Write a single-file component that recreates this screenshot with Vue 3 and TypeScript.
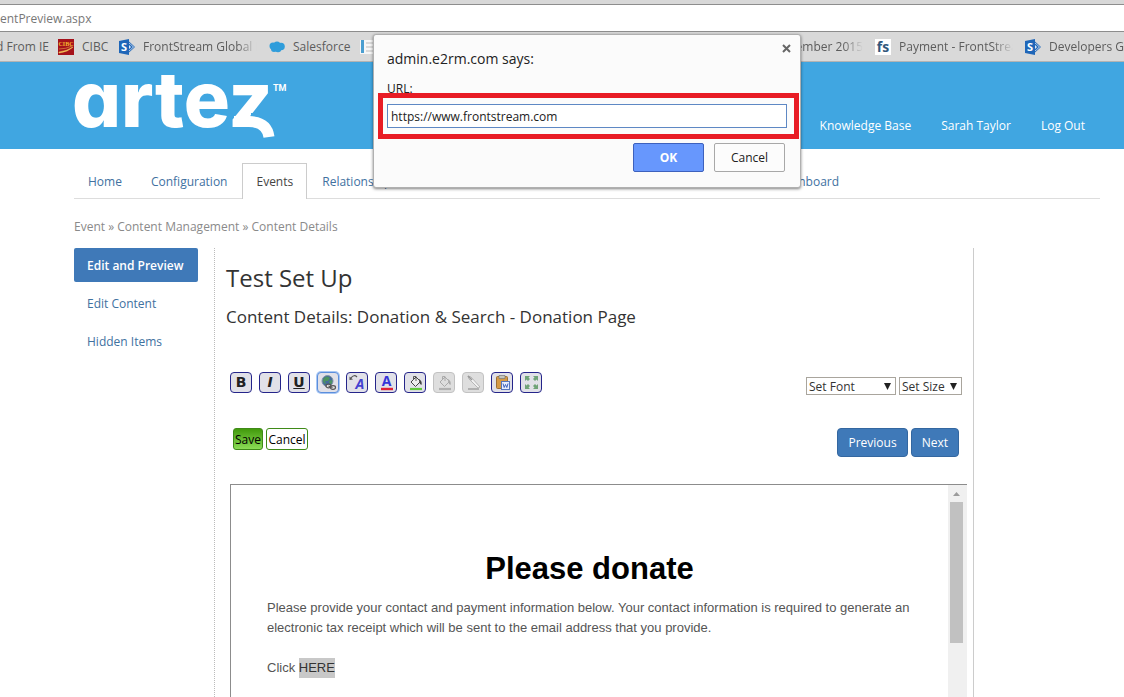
<script setup lang="ts">
import { ref } from 'vue'

const url = ref('https://www.frontstream.com')
const font = ref('Set Font')
const size = ref('Set Size')
const tabs = [
  { name: 'Home', active: false },
  { name: 'Configuration', active: false },
  { name: 'Events', active: true },
  { name: 'Relationships', active: false },
  { name: 'Dashboard', active: false },
]
const sideItems = ['Edit and Preview', 'Edit Content', 'Hidden Items']
const tools = [
  { id: 'bold', label: 'Bold' },
  { id: 'italic', label: 'Italic' },
  { id: 'underline', label: 'Underline' },
  { id: 'link', label: 'Insert link' },
  { id: 'style', label: 'Text style' },
  { id: 'color', label: 'Text color' },
  { id: 'fill', label: 'Background color' },
  { id: 'fill-off', label: 'Fill unavailable' },
  { id: 'line-off', label: 'Line unavailable' },
  { id: 'paste', label: 'Paste from Word' },
  { id: 'full', label: 'Full screen' },
]
</script>

<template>
  <div class="screen">
    <div class="strip"></div>
    <div class="address">entPreview.aspx</div>
    <nav class="bookmarks" aria-label="Bookmarks">
      <a href="#" class="bm first"><span class="bm-label">Imported From IE</span></a>
      <a href="#" class="bm cibc">
        <svg width="16" height="16" viewBox="0 0 16 16">
          <rect width="16" height="16" fill="#a5121b" />
          <text x="8" y="6.500" text-anchor="middle" font-size="6" font-weight="bold" fill="#f5b730" font-family="Liberation Serif, serif">CIBC</text>
          <path d="M1 13Q9 12 15 8Q10 13 1 14Z" fill="#f5c95b" stroke="#f5c95b" stroke-width=".5" />
          <path d="M1 10Q8 10 14 7" fill="none" stroke="#e8a04a" stroke-width=".6" />
        </svg>
        <span class="bm-label">CIBC</span>
      </a>
      <a href="#" class="bm">
        <svg width="16" height="16" viewBox="0 0 16 16">
          <path d="M9 2l6.500 6L9 14z" fill="#dce9f6" stroke="#2468b8" stroke-width="1" />
          <path d="M10 5l3 3-3 3" fill="none" stroke="#2468b8" stroke-width="1.400" />
          <path d="M0 2L10 0v16L0 14z" fill="#1f66b8" />
          <text x="5" y="12" text-anchor="middle" font-size="11" font-weight="bold" fill="#fff" font-family="Open Sans, sans-serif">S</text>
        </svg>
        <span class="bm-label">FrontStream Global Intranet</span>
      </a>
      <a href="#" class="bm sales">
        <svg width="16" height="16" viewBox="0 0 16 16">
          <g fill="#2f9ddb"><circle cx="4" cy="7" r="3.500" /><circle cx="8" cy="6" r="3.500" /><circle cx="12" cy="7.500" r="3.800" /><circle cx="5" cy="10" r="3" /><circle cx="9" cy="10" r="3.300" /></g>
        </svg>
        <span class="bm-label">Salesforce</span>
      </a>
      <a href="#" class="bm" aria-label="Document">
        <svg width="16" height="16" viewBox="0 0 16 16">
          <path d="M0 1h16v14H0z" fill="#f6f6f6" /><path d="M1 1h3v13H1z" fill="#4a9ed0" />
          <path d="M6 4h8M6 8h8M6 12h8" stroke="#bcbcbc" />
        </svg>
      </a>
      <a href="#" class="bm covered"><span class="bm-label">September 2015</span></a>
      <a href="#" class="bm">
        <svg width="16" height="16" viewBox="0 0 16 16">
          <rect width="16" height="16" fill="#fff" />
          <text x="8" y="13" text-anchor="middle" font-size="14" font-weight="bold" fill="#32587c" font-family="Open Sans, sans-serif">fs</text>
        </svg>
        <span class="bm-label">Payment - FrontStream</span>
      </a>
      <a href="#" class="bm">
        <svg width="16" height="16" viewBox="0 0 16 16">
          <path d="M9 2l6.500 6L9 14z" fill="#dce9f6" stroke="#2468b8" stroke-width="1" />
          <path d="M10 5l3 3-3 3" fill="none" stroke="#2468b8" stroke-width="1.400" />
          <path d="M0 2L10 0v16L0 14z" fill="#1f66b8" />
          <text x="5" y="12" text-anchor="middle" font-size="11" font-weight="bold" fill="#fff" font-family="Open Sans, sans-serif">S</text>
        </svg>
        <span class="bm-label">Developers Guide</span>
      </a>
    </nav>

    <header class="header">
      <svg class="logo" width="220" height="88" viewBox="0 0 220 88" role="img" aria-label="artez">
        <text class="wordmark" x="-2" y="66">artez</text>
        <path d="M177 52H200V70H177Z" fill="#40a6e1" />
        <path d="M160 60.500H175Q193 61 195 76" fill="none" stroke="#fff" stroke-width="11" />
        <text class="tm" x="199" y="30">TM</text>
      </svg>
      <nav class="user-links" aria-label="Account">
        <a href="#">Knowledge Base</a>
        <a href="#">Sarah Taylor</a>
        <a href="#">Log Out</a>
      </nav>
    </header>

    <div class="page">
      <nav class="tabs" aria-label="Main">
        <a v-for="t in tabs" :key="t.name" href="#" class="tab" :class="{ active: t.active, last: t.name === 'Dashboard' }">{{ t.name }}</a>
      </nav>
      <p class="crumbs">Event » Content Management » Content Details</p>
      <div class="columns">
        <nav class="side" aria-label="Content">
          <a v-for="(s, i) in sideItems" :key="s" href="#" :class="{ current: i === 0 }">{{ s }}</a>
        </nav>
        <main class="main">
          <h1>Test Set Up</h1>
          <h2>Content Details: Donation &amp; Search - Donation Page</h2>
          <div class="toolbar">
            <div class="tools">
              <button v-for="t in tools" :key="t.id" type="button" class="tool" :class="{ off: t.id.endsWith('-off'), focus: t.id === 'link' }" :disabled="t.id.endsWith('-off')" :aria-label="t.label">
                <b v-if="t.id === 'bold'" class="g">B</b>
                <i v-else-if="t.id === 'italic'" class="g">I</i>
                <u v-else-if="t.id === 'underline'" class="g">U</u>
                <svg v-else-if="t.id === 'link'" width="19" height="19" viewBox="0 0 19 19">
                  <circle cx="8.500" cy="8" r="5.500" fill="#456c9c" stroke="#8495a8" />
                  <path d="M5 5Q8 2 11 5L9 8L6 8L7 11Q4 10 4 7ZM10 8L13 7Q14 10 11 12Z" fill="#4c9460" />
                  <g fill="#ddd" stroke="#555" stroke-width="1.200"><ellipse cx="9.500" cy="13" rx="2.500" ry="1.800" /><ellipse cx="14" cy="14.500" rx="2.500" ry="1.800" /></g>
                  <path d="M9.500 13L13.500 14.500" stroke="#555" stroke-width="1.200" />
                </svg>
                <svg v-else-if="t.id === 'style'" width="19" height="19" viewBox="0 0 19 19">
                  <text x="12" y="16" text-anchor="middle" class="ital" fill="#4441d0">A</text>
                  <path d="M3 5Q6 1 9 4" fill="none" stroke="#555" stroke-width="1.200" />
                  <path d="M1.500 3.500L5 6.500L1.500 7Z" fill="#555" />
                </svg>
                <svg v-else-if="t.id === 'color'" width="19" height="19" viewBox="0 0 19 19">
                  <text x="9.500" y="13" text-anchor="middle" class="letter" fill="#3636d8">A</text>
                  <path d="M4 16h12" stroke="#e02235" stroke-width="2.400" />
                </svg>
                <svg v-else-if="t.id === 'fill' || t.id === 'fill-off'" width="19" height="19" viewBox="0 0 19 19">
                  <path d="M5 9l5-5 4.500 4.500-5 5z" :fill="t.id === 'fill' ? '#eee' : '#ddd'" :stroke="t.id === 'fill' ? '#444' : '#aaa'" />
                  <path d="M7.500 7V3.500h2.500V8" fill="none" :stroke="t.id === 'fill' ? '#555' : '#aaa'" />
                  <path d="M13 6q3.500 2 2.500 6-2-1-2.500-4z" :fill="t.id === 'fill' ? '#444' : '#aaa'" />
                  <path d="M4 16h12" :stroke="t.id === 'fill' ? '#62c83f' : '#b0b0b0'" stroke-width="2.200" />
                </svg>
                <svg v-else-if="t.id === 'line-off'" width="19" height="19" viewBox="0 0 19 19">
                  <path d="M4 3l3 1 9 10-2 1L5 6z" fill="#f0f0f0" stroke="#aaa" stroke-width=".8" />
                  <path d="M4 3l4 4" stroke="#999" stroke-width="1.600" />
                  <path d="M4 16h11" stroke="#b0b0b0" stroke-width="2" />
                </svg>
                <svg v-else-if="t.id === 'paste'" width="19" height="19" viewBox="0 0 19 19">
                  <rect x="3.500" y="3.500" width="11" height="12" rx="1" fill="#d59a46" stroke="#9d7135" />
                  <path d="M6 2.500h6v3H6z" fill="#c5c5bd" stroke="#777" stroke-width=".7" />
                  <rect x="8.500" y="8.500" width="8" height="8" fill="#e7eeff" stroke="#5475bd" />
                  <path d="M10 10.500l1.200 4 1.300-3 1.300 3 1.200-4" fill="none" stroke="#3d62bd" />
                </svg>
                <svg v-else width="19" height="19" viewBox="0 0 19 19">
                  <g fill="#6fa377"><path d="M3 3h5L6.500 4.500 8 6 6 8 4.500 6.500 3 8zM16 3h-5l1.500 1.500L11 6l2 2 1.500-1.500L16 8zM3 16h5l-1.500-1.500L8 13l-2-2-1.500 1.500L3 11zM16 16h-5l1.500-1.500L11 13l2-2 1.500 1.500L16 11z" /></g>
                </svg>
              </button>
            </div>
            <div class="selects">
              <label><select v-model="font" class="font-select" aria-label="Font"><option>Set Font</option></select></label>
              <label><select v-model="size" class="size-select" aria-label="Size"><option>Set Size</option></select></label>
            </div>
          </div>
          <div class="actions">
            <div class="save-group">
              <button type="button" class="save">Save</button>
              <button type="button" class="discard">Cancel</button>
            </div>
            <div class="steps">
              <button type="button">Previous</button>
              <button type="button">Next</button>
            </div>
          </div>
          <section class="editor">
            <div class="document">
              <h3>Please donate</h3>
              <p>Please provide your contact and payment information below. Your contact information is required to generate an electronic tax receipt which will be sent to the email address that you provide.</p>
              <p>Click <mark>HERE</mark></p>
            </div>
            <div class="scroll">
              <svg width="17" height="17" viewBox="0 0 17 17"><path d="M4 11l3.500-4 3.500 4z" fill="#9b9b9b" /></svg>
              <div class="thumb"></div>
            </div>
          </section>
        </main>
      </div>
    </div>

    <form class="dialog" role="dialog" aria-labelledby="dialog-title" @submit.prevent>
      <div class="dialog-head">
        <strong id="dialog-title">admin.e2rm.com says:</strong>
        <button type="button" class="close" aria-label="Close">
          <svg width="9" height="9" viewBox="0 0 9 9"><path d="M1 1l7 7M8 1L1 8" stroke="#666" stroke-width="2" /></svg>
        </button>
      </div>
      <label for="url" class="url-label">URL:</label>
      <div class="highlight"><input id="url" v-model="url" type="text" /></div>
      <div class="dialog-actions">
        <button type="submit" class="ok">OK</button>
        <button type="button" class="no">Cancel</button>
      </div>
    </form>
  </div>
</template>

<style>
html,
body {
  margin: 0;
  background: #fff;
}
</style>

<style scoped>
* {
  box-sizing: border-box;
}
.screen {
  position: relative;
  display: flex;
  flex-direction: column;
  height: 100vh;
  overflow: hidden;
  font: 12px/18px "Open Sans", sans-serif;
  color: #333;
}
a {
  text-decoration: none;
  color: #41719f;
}
button,
input,
select {
  font: inherit;
  margin: 0;
  padding: 0;
}
.strip {
  flex: none;
  height: 5px;
  background: #d8d8d8;
  border-bottom: 1px solid #8d8d8d;
}
.address {
  flex: none;
  height: 26px;
  line-height: 27px;
  font-size: 12px;
  color: #777;
}
.bookmarks {
  flex: none;
  display: flex;
  gap: 12px;
  align-items: center;
  height: 31px;
  background: #d9d9d9;
  border-top: 1px solid #8d8d8d;
  border-bottom: 1px solid #b3b3b3;
}
.bm {
  flex: none;
  display: flex;
  align-items: center;
  gap: 8px;
  width: 138px;
  color: #5c5c5c;
  white-space: nowrap;
}
.bm svg {
  flex: none;
}
.bm-label {
  overflow: hidden;
  flex: 0 1 auto;
  mask-image: linear-gradient(to right, #000 calc(100% - 20px), transparent);
}
.first {
  width: 49px;
  margin-right: -3px;
  justify-content: flex-end;
}
.first .bm-label {
  flex: none;
}
.first .bm-label,
.cibc .bm-label,
.sales .bm-label {
  mask-image: none;
  overflow: visible;
}
.cibc {
  width: 49px;
}
.sales {
  width: 79px;
}
.covered {
  margin-left: 215px;
  justify-content: flex-end;
}
.header {
  flex: none;
  display: flex;
  justify-content: space-between;
  align-items: flex-end;
  height: 87px;
  padding: 0 39px 0 74px;
  background: #40a6e1;
}
.logo {
  display: block;
}
.wordmark {
  font: 800 77px Inter, sans-serif;
  font-feature-settings: "cv11";
  fill: #fff;
}
.tm {
  font: bold 9px Roboto, sans-serif;
  fill: #fff;
}
.user-links {
  display: flex;
  gap: 30px;
  padding-bottom: 14px;
}
.user-links a {
  color: #fff;
}
.page {
  flex: 1;
  min-height: 0;
  display: flex;
  flex-direction: column;
  padding: 14px 24px 0 74px;
}
.tabs {
  flex: none;
  display: flex;
  gap: 1px;
  height: 36px;
  border-bottom: 1px solid #ddd;
}
.tab {
  height: 36px;
  padding: 9px 13px 0;
  border: 1px solid transparent;
  border-bottom: 0;
  line-height: 17px;
}
.tab.active {
  color: #444;
  background: #fff;
  border-color: #ccc;
}
.tab.last {
  margin-left: 351px;
}
.crumbs {
  flex: none;
  margin: 19px 0 12px;
  color: #8a8a8a;
}
.columns {
  flex: 1;
  min-height: 0;
  display: flex;
  gap: 16px;
  padding-right: 126px;
}
.side {
  flex: none;
  width: 124px;
  display: flex;
  flex-direction: column;
  gap: 4px;
}
.side a {
  padding: 9px 13px 7px;
  border-radius: 2px;
}
.side .current {
  background: #3f79b8;
  color: #fff;
  font-weight: 600;
}
.main {
  flex: 1;
  min-width: 0;
  display: flex;
  flex-direction: column;
  padding: 14px 6px 0 11px;
  border-left: 1px dotted #bbb;
  border-right: 1px solid #ccc;
}
h1,
h2 {
  flex: none;
  margin: 0;
  font-weight: 400;
}
h1 {
  font-size: 24px;
  line-height: 32px;
}
h2 {
  margin-top: 12px;
  font-size: 17px;
  line-height: 22px;
}
.toolbar {
  flex: none;
  display: flex;
  justify-content: space-between;
  align-items: flex-start;
  margin-top: 44px;
  padding: 0 5px 0 4px;
}
.tools {
  display: flex;
  gap: 7px;
}
.tool {
  display: flex;
  align-items: center;
  justify-content: center;
  width: 22px;
  height: 21px;
  border: 1px solid #25258a;
  border-radius: 4px;
  background: #e1e1e8;
  color: #222;
}
.tool svg {
  flex: none;
}
.tool.focus {
  border-color: #5b8edc;
  box-shadow: 0 0 0 1px #a9c8f5;
}
.tool.off {
  border-color: #c2c2c2;
  background: #dedede;
}
.g {
  font: bold 14px/19px "DejaVu Sans", sans-serif;
}
i.g {
  font-style: italic;
}
.letter {
  font: bold 14px "Open Sans", sans-serif;
}
.ital {
  font: italic bold 14px "Open Sans", sans-serif;
}
.selects {
  display: flex;
  gap: 3px;
  padding-top: 5px;
}
.selects label {
  display: flex;
}
select {
  height: 18px;
  padding: 1px 2px 0;
  border: 1px solid #a9a59d;
  border-radius: 0;
  color: #333;
  appearance: none;
  background: url("data:image/svg+xml,%3Csvg xmlns='http://www.w3.org/2000/svg' width='7' height='7'%3E%3Cpath d='M0 0h7L3.500 7z' fill='%23222'/%3E%3C/svg%3E") no-repeat right 4px top 5px #fff;
  line-height: 16px;
}
.font-select {
  width: 90px;
}
.size-select {
  width: 63px;
}
.actions {
  flex: none;
  display: flex;
  justify-content: space-between;
  align-items: flex-start;
  margin-top: 33px;
  padding: 0 8px 0 7px;
}
.save-group,
.steps {
  display: flex;
  gap: 3px;
}
.save,
.discard {
  height: 22px;
  padding-top: 1px;
  border: 1px solid #3f8a18;
  border-radius: 3px;
  background: #fff;
  color: #000;
}
.save {
  width: 30px;
  background: linear-gradient(#429a0c, #8bdc56);
}
.discard {
  width: 42px;
}
.steps button {
  height: 29px;
  padding: 1px 10px 0;
  border: 1px solid #3467a0;
  border-radius: 4px;
  background: #3f79b8;
  color: #fff;
}
.editor {
  flex: 1;
  min-height: 0;
  display: flex;
  margin-top: 27px;
  margin-left: 4px;
  border-top: 1px solid #8c8c8c;
  border-left: 1px solid #8c8c8c;
}
.document {
  flex: 1;
  padding: 65px 36px 0;
  font: 13px/20px "Liberation Sans", Arial, sans-serif;
  color: #555;
}
h3 {
  margin: 0 0 10px;
  color: #000;
  font-size: 31px;
  line-height: 38px;
  text-align: center;
}
.document p {
  margin: 0 0 20px;
}
mark {
  display: inline-block;
  background: #c8c8c8;
  color: #333;
}
.scroll {
  flex: none;
  width: 19px;
  padding-left: 1px;
  background: #f0f0f0;
}
.scroll svg {
  display: block;
}
.thumb {
  width: 13px;
  height: 141px;
  margin-left: 1px;
  background: #c1c1c1;
}
.dialog {
  position: absolute;
  top: 34px;
  left: 373px;
  width: 428px;
  height: 154px;
  padding: 14px 0 0;
  background: #fbfbfb;
  border: 1px solid #b0b0b0;
  border-radius: 3px;
  box-shadow: 0 1px 3px rgba(0, 0, 0, 0.5);
  color: #222;
}
.dialog-head {
  display: flex;
  justify-content: space-between;
  align-items: flex-start;
  height: 31px;
  padding: 0 9px 0 13px;
}
.dialog-head strong {
  font-size: 14px;
  line-height: 20px;
  font-weight: 400;
}
.close {
  border: 0;
  background: none;
  line-height: 0;
  height: 9px;
  margin-top: -5px;
}
.url-label {
  display: block;
  height: 13px;
  padding-left: 13px;
}
.highlight {
  position: relative;
  margin: 0 1px 4px 4px;
  padding: 6px 7px 6px 4px;
  border: 5px solid #e81c25;
}
.highlight input {
  display: block;
  width: 100%;
  height: 24px;
  padding: 0 3px;
  border: 1px solid #5e88c4;
  background: #fff;
  color: #222;
}
.dialog-actions {
  display: flex;
  justify-content: flex-end;
  gap: 10px;
  padding-right: 15px;
}
.dialog-actions button {
  width: 71px;
  height: 29px;
  border: 1px solid #a8a8a8;
  border-radius: 2px;
  background: #fcfcfc;
  color: #222;
}
.dialog-actions .ok {
  border-color: #3d61bd;
  background: #6797fd;
  color: #fff;
  font-weight: 700;
}
</style>
